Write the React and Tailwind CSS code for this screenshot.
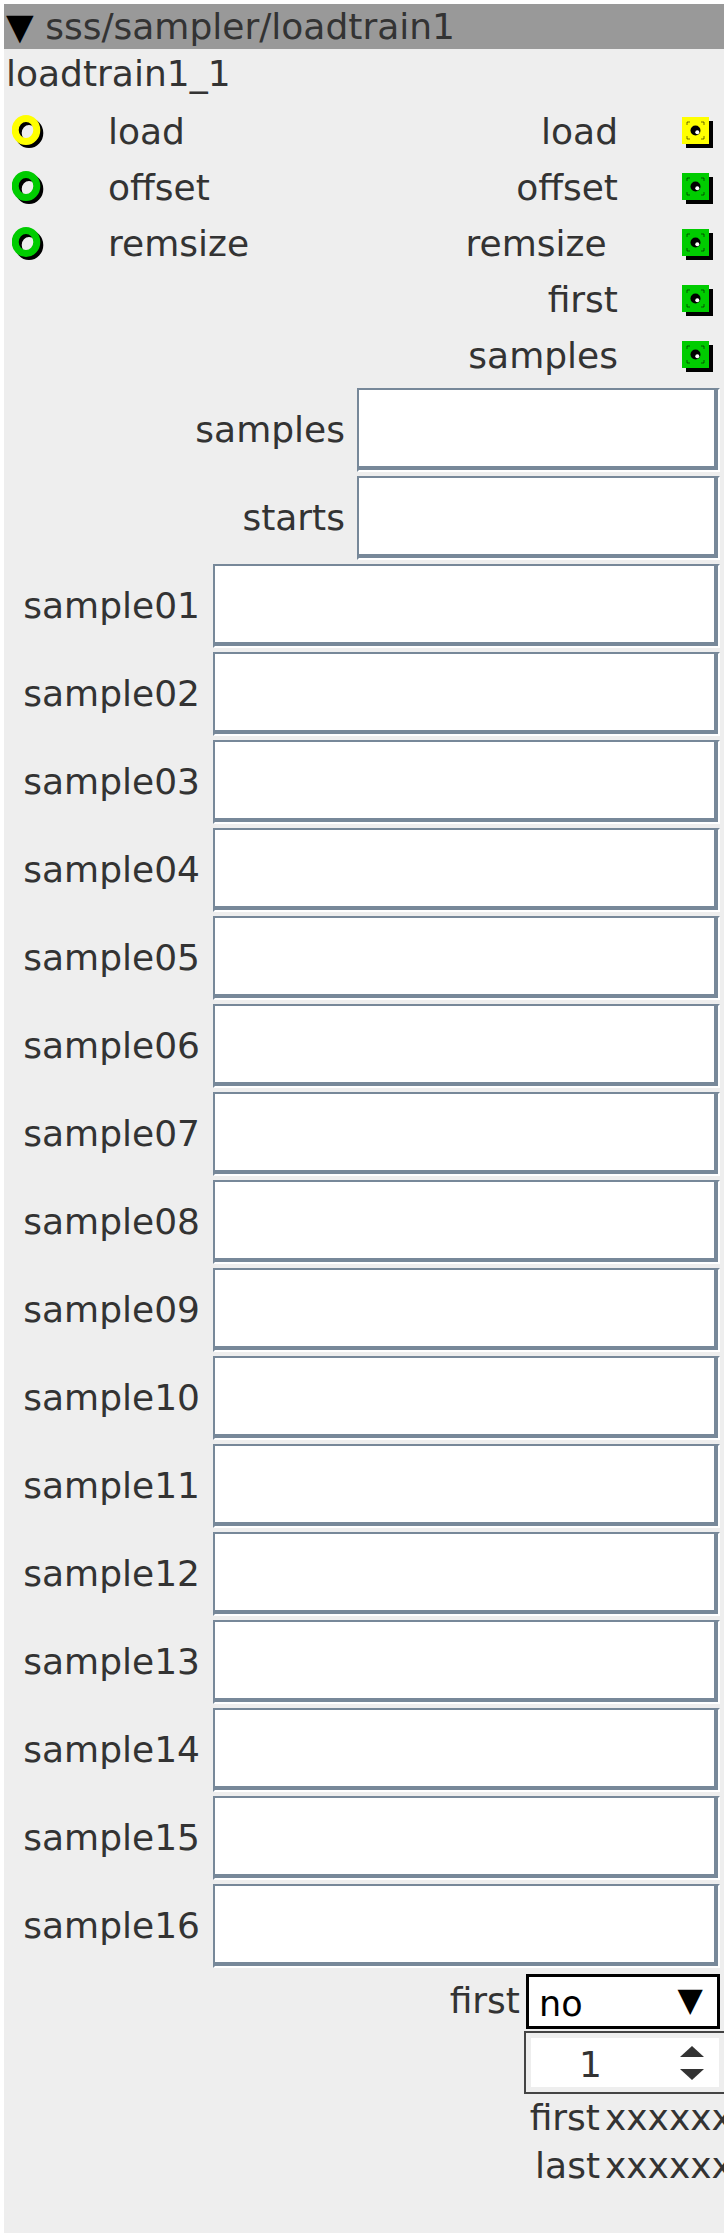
import React from "react";

function Ring({ color }) {
  return (
    <svg width="38" height="38" viewBox="0 0 38 38" className="block">
      <ellipse cx="17" cy="19" rx="10.8" ry="11.6" fill="none" stroke="#000" strokeWidth="7" />
      <ellipse cx="14" cy="16" rx="10.8" ry="11.6" fill="none" stroke={color} strokeWidth="7" />
    </svg>
  );
}

function Square({ color }) {
  return (
    <svg width="32" height="32" viewBox="0 0 32 32" className="block">
      <rect x="4" y="4" width="27" height="27" fill="#000" />
      <rect x="0" y="0" width="27" height="27" fill={color} />
      <path d="M5 8 V5 H8 M19 5 H22 V8 M22 19 V22 H19 M8 22 H5 V19" fill="none" stroke="#000" strokeOpacity="0.55" strokeWidth="1" />
      <circle cx="13.5" cy="13.5" r="5" fill="#000" />
      <circle cx="15.3" cy="15.3" r="2" fill="#fff" />
    </svg>
  );
}

function Box({ w }) {
  return (
    <div
      className={`${w} h-[84px] bg-white border-2 border-t-[#778899] border-l-[#778899] border-b-white border-r-white shadow-[inset_-4px_-4px_0_#778899]`}
    />
  );
}

const ports = [
  { l: "load", lc: "#ffff00", r: "load", rc: "#ffff00" },
  { l: "offset", lc: "#00cc00", r: "offset", rc: "#00cc00" },
  { l: "remsize", lc: "#00cc00", r: "remsize\u00a0", rc: "#00cc00" },
  { l: null, r: "first", rc: "#00cc00" },
  { l: null, r: "samples", rc: "#00cc00" },
];

const samples = Array.from({ length: 16 }, (_, i) => `sample${String(i + 1).padStart(2, "0")}`);

export default function App() {
  return (
    <div className="bg-white p-[4px] w-[728px] font-['DejaVu_Sans',sans-serif] text-[36px] text-[#333]">
      <div className="bg-[#eeeeee] w-[720px] overflow-hidden pb-[43px]">
        <div className="h-[45px] bg-[#999999] flex items-center pl-[2px] leading-none whitespace-nowrap">
          <span className="text-black">▼</span>
          <span>&nbsp;sss/sampler/loadtrain1</span>
        </div>
        <div className="h-[50px] flex items-center pl-[2px] leading-none">loadtrain1_1</div>
        <div className="pt-[5px]">
          {ports.map((p, i) => (
            <div key={i} className="h-[56px] flex items-center leading-none">
              <div className="w-[104px] pl-[8px] pt-[1px]">{p.l ? <Ring color={p.lc} /> : null}</div>
              <div className="flex-1">{p.l}</div>
              <div className="text-right whitespace-pre pr-[4px]">{p.r}</div>
              <div className="w-[102px] pl-[60px] pt-[1px]">
                <Square color={p.rc} />
              </div>
            </div>
          ))}
        </div>
        <div className="mt-[4px] flex flex-col gap-[4px]">
          {["samples", "starts"].map((s) => (
            <div key={s} className="flex items-center">
              <div className="w-[353px] pr-[12px] text-right leading-none">{s}</div>
              <Box w="w-[363px]" />
            </div>
          ))}
          {samples.map((s) => (
            <div key={s} className="flex items-center">
              <div className="w-[209px] pr-[13px] text-right leading-none">{s}</div>
              <Box w="w-[507px]" />
            </div>
          ))}
        </div>
        <div className="mt-[6px] flex items-center justify-end pr-[4px]">
          <div className="pr-[6px] leading-none pb-[2px]">first</div>
          <div className="w-[194px] h-[55px] border-[3px] border-black bg-white flex items-end justify-between pl-[10px] pr-[14px] text-black text-[35px] leading-none">
            <span className="pb-[4px]">no</span>
            <span className="self-center pb-[4px] text-[33px]">▼</span>
          </div>
        </div>
        <div className="mt-[2px] ml-[520px] w-[202px] h-[63px] border-2 border-[#444] flex">
          <div className="flex-1 border-[5px] border-[#eeeeee] bg-white flex items-center">
            <div className="w-[119px] text-center leading-none pt-[4px]">1</div>
            <div className="ml-[30px] flex flex-col items-center gap-[12px]">
              <svg width="24" height="11" viewBox="0 0 24 11" className="block">
                <polygon points="12,0 24,11 0,11" fill="#333" />
              </svg>
              <svg width="24" height="11" viewBox="0 0 24 11" className="block">
                <polygon points="0,0 24,0 12,11" fill="#333" />
              </svg>
            </div>
          </div>
        </div>
        <div className="grid grid-cols-[596px_auto] leading-none">
          <div className="h-[48px] flex items-center justify-end">first</div>
          <div className="h-[48px] flex items-center pl-[5px] whitespace-nowrap">xxxxxxxxxx</div>
          <div className="h-[48px] flex items-center justify-end">last</div>
          <div className="h-[48px] flex items-center pl-[5px] whitespace-nowrap">xxxxxxxxxx</div>
        </div>
      </div>
    </div>
  );
}
